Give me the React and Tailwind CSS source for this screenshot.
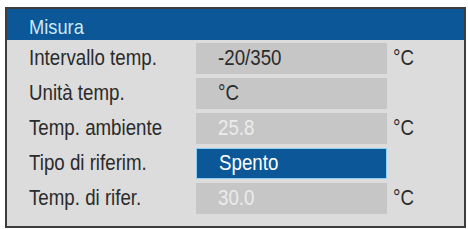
import React from 'react';

const rows = [
  { label: 'Intervallo temp.', value: '-20/350', unit: '°C', kind: 'normal' },
  { label: 'Unità temp.', value: '°C', unit: '', kind: 'normal' },
  { label: 'Temp. ambiente', value: '25.8', unit: '°C', kind: 'disabled' },
  { label: 'Tipo di riferim.', value: 'Spento', unit: '', kind: 'selected' },
  { label: 'Temp. di rifer.', value: '30.0', unit: '°C', kind: 'disabled' },
];

// narrow look: the panel font is condensed, so squeeze Liberation Sans a bit
const Txt = ({ children }) => (
  <span className="inline-block whitespace-nowrap origin-left scale-x-[0.87]">{children}</span>
);

const App = () => {
  return (
    <div
      className="w-[468px] h-[229px] bg-white pt-[7px] pl-[5px]"
      style={{ fontFamily: '"Liberation Sans", Arial, sans-serif' }}
    >
      <div className="w-[461px] h-[221px] border-2 border-[#3d3d3d] bg-[#dcdcdc] flex flex-col">
        <div className="h-[31px] bg-[#0b5797] pl-[22px] pt-[6px] text-[21px] leading-[24px] text-[#cbe9f8]">
          <Txt>Misura</Txt>
        </div>
        <div className="flex flex-col gap-[4px] pt-[3px]">
          {rows.map((row) => (
            <div key={row.label} className="flex items-center h-[31px] text-[21.5px]">
              <div className="w-[189px] pl-[22px] text-[#2b2b2b]">
                <Txt>{row.label}</Txt>
              </div>
              <div
                className={`w-[191px] h-[31px] flex items-center pl-[22px] ${
                  row.kind === 'selected'
                    ? 'bg-[#0b5797] text-white border border-[#8fd0f2]'
                    : row.kind === 'disabled'
                    ? 'bg-[#c6c6c6] text-[#ececec]'
                    : 'bg-[#c6c6c6] text-[#2b2b2b]'
                }`}
              >
                <Txt>{row.value}</Txt>
              </div>
              <div className="ml-[6px] text-[#2b2b2b]">
                <Txt>{row.unit}</Txt>
              </div>
            </div>
          ))}
        </div>
      </div>
    </div>
  );
};

export default App;
